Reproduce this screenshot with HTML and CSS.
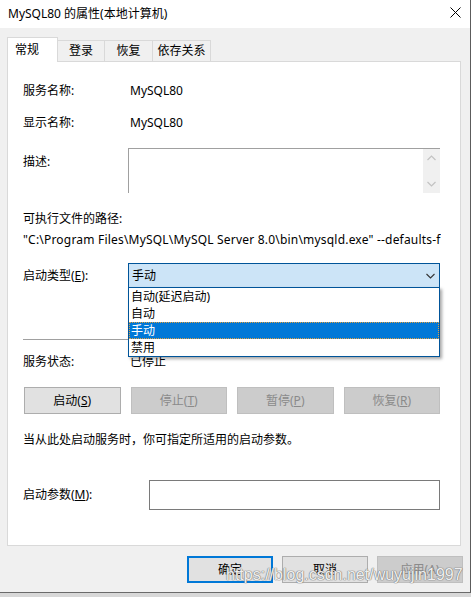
FILE: index.html
```html
<!DOCTYPE html>
<html lang="zh-CN">
<head>
<meta charset="utf-8">
<title>MySQL80 的属性(本地计算机)</title>
<link rel="stylesheet" href="styles.css">
</head>
<body>
<div class="window">
  <div class="titlebar">
    <span class="title">MySQL80 的属性(本地计算机)</span>
    <svg class="close" width="11" height="11" viewBox="0 0 11 11"><path d="M0.5 0.5 L10.5 10.5 M10.5 0.5 L0.5 10.5" stroke="#000" stroke-width="1" fill="none"/></svg>
  </div>
  <div class="content">
    <div class="tabs">
      <div class="tab active">常规</div>
      <div class="tab t-login">登录</div>
      <div class="tab t-recover">恢复</div>
      <div class="tab t-deps">依存关系</div>
    </div>
    <div class="panel">
      <div class="row r-name"><span class="label">服务名称:</span><span class="value">MySQL80</span></div>
      <div class="row r-display"><span class="label">显示名称:</span><span class="value">MySQL80</span></div>
      <div class="row r-desc">
        <span class="label desc-label">描述:</span>
        <div class="textarea">
          <div class="scrollbar">
            <svg width="9" height="6" viewBox="0 0 9 6"><path d="M0.5 5 L4.5 1 L8.5 5" stroke="#c2c2c2" stroke-width="1.2" fill="none"/></svg>
            <svg width="9" height="6" viewBox="0 0 9 6"><path d="M0.5 1 L4.5 5 L8.5 1" stroke="#c2c2c2" stroke-width="1.2" fill="none"/></svg>
          </div>
        </div>
      </div>
      <div class="row r-exe">可执行文件的路径:</div>
      <div class="row r-path">"C:\Program Files\MySQL\MySQL Server 8.0\bin\mysqld.exe" --defaults-file="C:\ProgramData\MySQL\MySQL Server 8.0\my.ini" MySQL80</div>
      <div class="row r-type">
        <span class="label">启动类型(<u>E</u>):</span>
        <div class="combo">
          <span class="combo-text">手动</span>
          <svg class="chev" width="9" height="6" viewBox="0 0 9 6"><path d="M0.5 1 L4.5 5 L8.5 1" stroke="#333" stroke-width="1.1" fill="none"/></svg>
          <ul class="dropdown">
            <li>自动(延迟启动)</li>
            <li>自动</li>
            <li class="selected">手动</li>
            <li>禁用</li>
          </ul>
        </div>
      </div>
      <div class="separator"></div>
      <div class="row r-status"><span class="label">服务状态:</span><span class="value">已停止</span></div>
      <div class="svc-buttons">
        <button class="btn">启动(<u>S</u>)</button>
        <button class="btn disabled">停止(<u>T</u>)</button>
        <button class="btn disabled">暂停(<u>P</u>)</button>
        <button class="btn disabled">恢复(<u>R</u>)</button>
      </div>
      <div class="row r-note">当从此处启动服务时，你可指定所适用的启动参数。</div>
      <div class="row r-param">
        <span class="label param-label">启动参数(<u>M</u>):</span>
        <div class="input"></div>
      </div>
    </div>
    <div class="footer">
      <button class="btn fbtn default">确定</button>
      <button class="btn fbtn">取消</button>
      <button class="btn fbtn disabled">应用(A)</button>
    </div>
  </div>
  <div class="watermark">https://blog.csdn.net/wuyujin1997</div>
</div>
<div class="taskbar"></div>
</body>
</html>
```

FILE: styles.css
```css
* { box-sizing: border-box; }
html, body { margin: 0; padding: 0; }
body {
  width: 471px;
  height: 597px;
  overflow: hidden;
  background: #dcdcdc;
  font-family: "Noto Sans", "Noto Sans CJK SC", sans-serif;
  font-size: 12px;
  line-height: 16px;
  color: #000;
}
.window {
  position: relative;
  width: 471px;
  height: 593px;
  background: #f0f0f0;
  border-right: 1px solid #5c5c5c;
  border-bottom: 1px solid #6a6a6a;
  display: flex;
  flex-direction: column;
}
.titlebar {
  height: 28px;
  background: #fff;
  display: flex;
  align-items: center;
  justify-content: space-between;
  padding: 0 9px 0 8px;
  flex: none;
}
.title { font-size: 12px; }
.close { display: block; margin-bottom: 3px; }
.content { padding: 9px 0 0 7px; }
.tabs {
  display: flex;
  align-items: flex-end;
  height: 24px;
}
.tab {
  height: 21px;
  background: #f0f0f0;
  border-top: 1px solid #d9d9d9;
  border-right: 1px solid #d9d9d9;
  text-align: center;
  line-height: 20px;
}
.tab.active {
  width: 51px;
  height: 25px;
  margin-bottom: -1px;
  background: #fff;
  border: 1px solid #d9d9d9;
  border-bottom: none;
  text-align: left;
  padding-left: 7px;
  line-height: 24px;
  position: relative;
  z-index: 1;
}
.t-login { width: 47px; }
.t-recover { width: 48px; }
.t-deps { width: 58px; }
.panel {
  width: 454px;
  height: 485px;
  background: #fff;
  border: 1px solid #d9d9d9;
  padding: 0 20px 0 15px;
  display: flex;
  flex-direction: column;
}
.row { display: flex; align-items: center; height: 16px; white-space: nowrap; }
.label { width: 105px; flex: none; }
.value { padding-left: 2px; }
.r-name { margin-top: 21px; }
.r-display { margin-top: 16px; }
.r-desc { margin-top: 17px; height: 45px; align-items: flex-start; }
.desc-label { padding-top: 6px; }
.textarea {
  flex: 1;
  height: 45px;
  border-top: 1px solid #a0a0a0;
  border-left: 1px solid #a0a0a0;
  display: flex;
  justify-content: flex-end;
}
.scrollbar {
  width: 17px;
  height: 44px;
  background: #f0f0f0;
  display: flex;
  flex-direction: column;
  justify-content: space-between;
  align-items: center;
  padding: 6px 0 6px;
}
.scrollbar svg { display: block; }
.r-exe { margin-top: 18px; }
.r-path { margin-top: 5px; width: 418px; overflow: hidden; display: block; letter-spacing: 0.2px; }
.r-type { margin-top: 15px; height: 25px; }
.combo {
  position: relative;
  flex: 1;
  height: 25px;
  background: #cce4f7;
  border: 1px solid #005499;
  display: flex;
  align-items: center;
  justify-content: space-between;
  padding: 0 4px 0 3px;
}
.chev { display: block; margin-top: 1px; }
.dropdown {
  position: absolute;
  left: -1px;
  right: -1px;
  top: 23px;
  margin: 0;
  padding: 0;
  list-style: none;
  background: #fff;
  border: 1px solid #005499;
  box-shadow: 2px 2px 3px rgba(0, 0, 0, 0.35);
  z-index: 5;
}
.dropdown li {
  height: 17px;
  line-height: 17px;
  padding-left: 2px;
}
.dropdown li.selected {
  background: #0078d7;
  color: #fff;
  outline: 1px dotted #e0a040;
  outline-offset: -1px;
}
.separator {
  margin-top: 51px;
  height: 1px;
  background: #a0a0a0;
  flex: none;
}
.r-status { margin-top: 14px; }
.svc-buttons {
  margin-top: 17px;
  padding-left: 1px;
  display: grid;
  grid-template-columns: repeat(4, 1fr);
  gap: 10px;
}
.btn {
  height: 27px;
  background: #e1e1e1;
  border: 1px solid #adadad;
  font: inherit;
  color: #000;
  padding: 0;
  margin: 0;
}
.btn.disabled {
  background: #cccccc;
  border-color: #bfbfbf;
  color: #8a8a8a;
}
.r-note { margin-top: 18px; }
.r-param { margin-top: 32px; height: 30px; }
.param-label { width: 126px; }
.input {
  flex: 1;
  height: 30px;
  border: 1px solid #7a7a7a;
}
.footer {
  display: flex;
  justify-content: flex-end;
  gap: 9px;
  margin-top: 10px;
  padding-right: 7px;
}
.fbtn { width: 86px; }
.fbtn.default { border: 2px solid #0078d7; }
.watermark {
  position: absolute;
  left: 226px;
  top: 566px;
  font-family: "Liberation Sans", Arial, sans-serif;
  font-size: 16px;
  line-height: 18px;
  color: rgba(255, 255, 255, 0.9);
  text-shadow: 0 0 1px #7a7a7a, 0 0 1px #7a7a7a, 0 0 1px #7a7a7a;
  z-index: 10;
  pointer-events: none;
}
.taskbar { height: 4px; background: #d8d8d8; }
```
